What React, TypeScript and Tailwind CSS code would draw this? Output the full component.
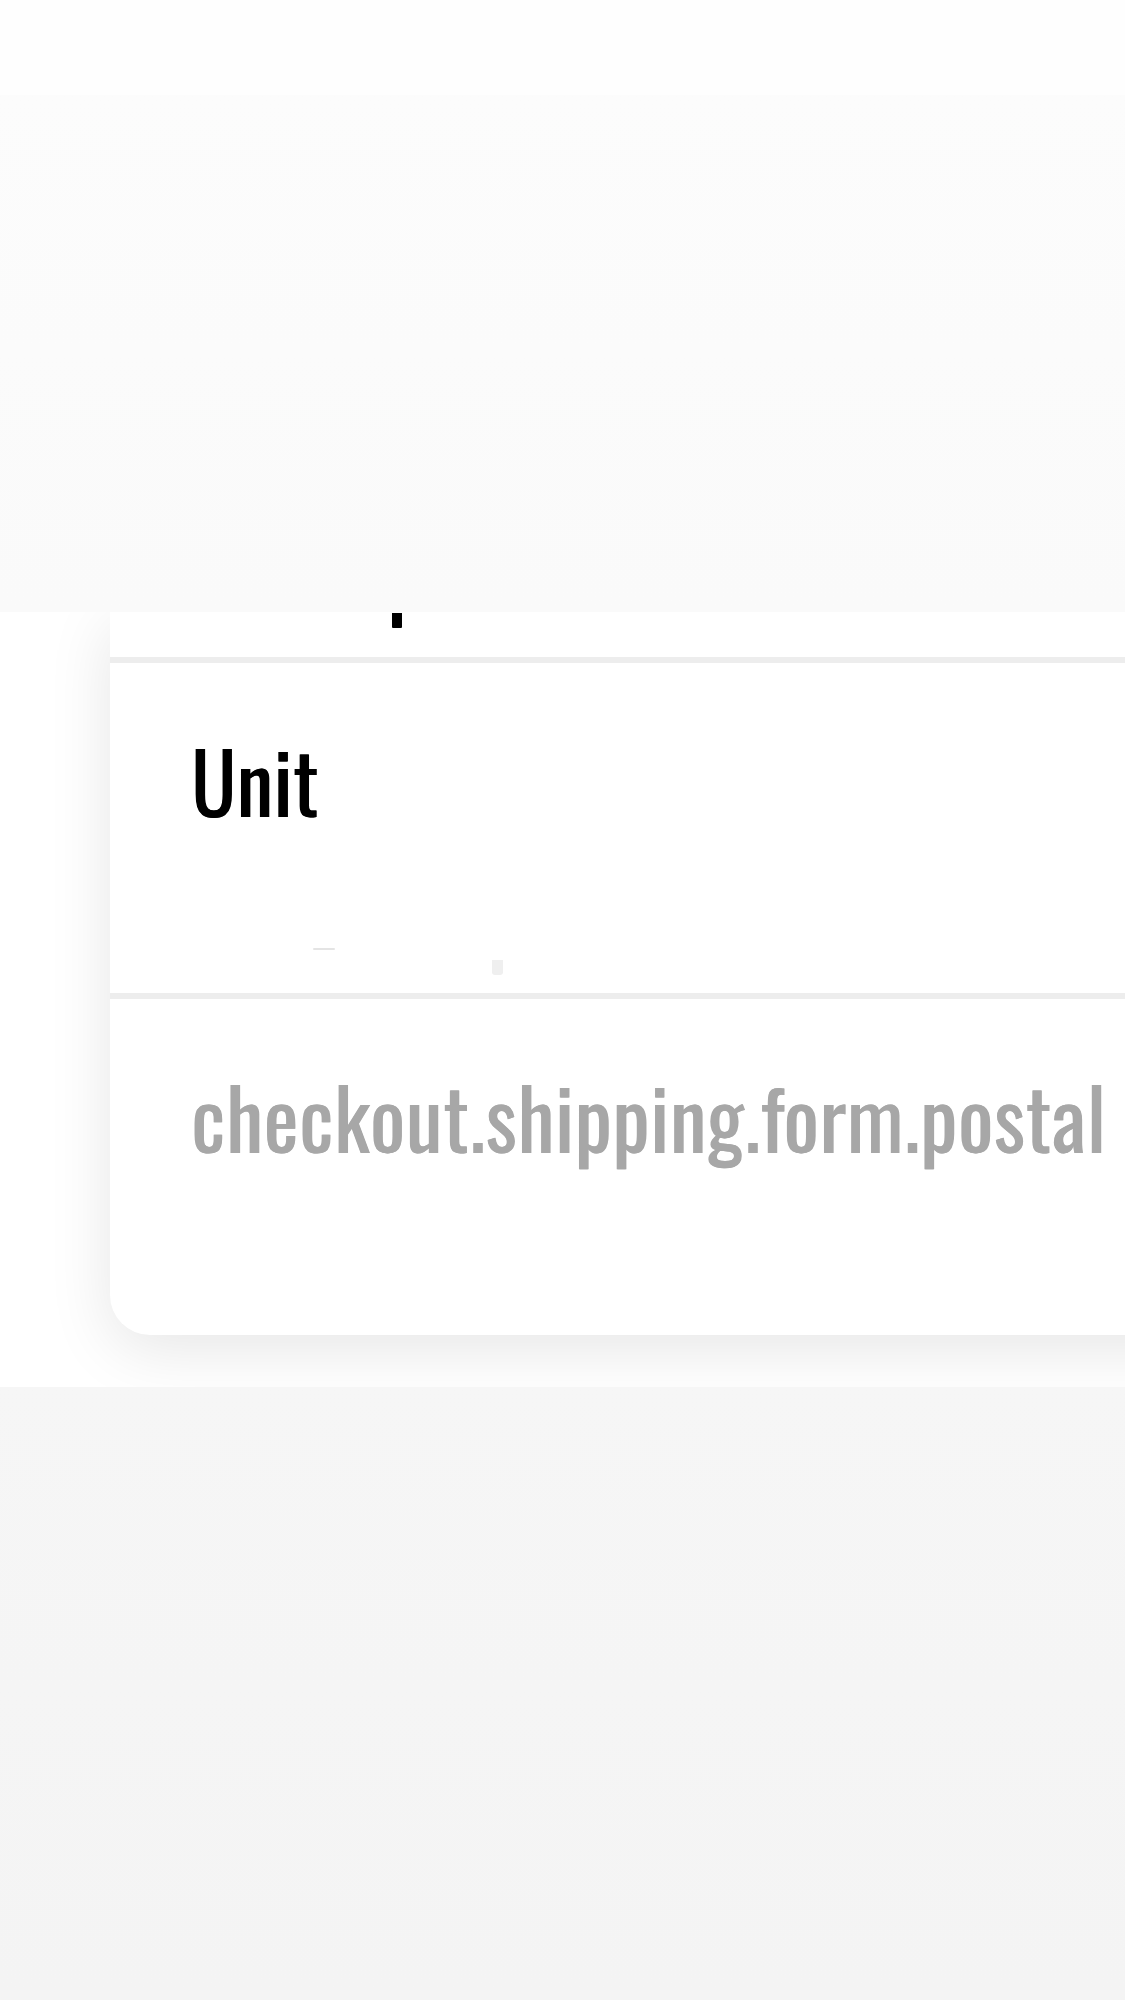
export default function App() {
  return (
    <div className="min-h-[2000px] flex flex-col bg-white font-['Oswald','Roboto_Condensed',sans-serif]">
      {/* Top bar */}
      <div className="h-[95px] bg-[#fefefe]"></div>

      {/* Sheet covering the upper part of the form */}
      <div className="h-[517px] bg-gradient-to-b from-[#fcfcfc] to-[#fafafa]"></div>

      {/* Form card */}
      <div className="bg-white pl-[110px] pb-[52px] overflow-hidden">
        <div className="w-[1100px] bg-white rounded-bl-[40px] shadow-[0_14px_64px_rgba(0,0,0,0.1)]">
          {/* tail of the previous field */}
          <div className="h-[45px] pl-[282px] pt-[1px]">
            <div className="w-[10px] h-[15px] bg-black rounded-b-[1px]"></div>
          </div>

          <div className="h-[336px] border-t-[6px] border-[#ededed] pl-[81px] pt-[75px] flex flex-col">
            <label className="text-[83px] font-normal tracking-[0.4px] [text-shadow:0.6px_0_0_currentColor] leading-none text-black">
              Unit
            </label>
            <div className="mt-[127px] ml-[122px] w-[22px] h-[2px] bg-[#e4e4e4] rounded-full"></div>
            <div className="mt-[10px] ml-[301px] w-[11px] h-[15px] bg-[#efefef] rounded-b-[3px]"></div>
          </div>

          <div className="h-[342px] border-t-[6px] border-[#ededed] pl-[81px] pt-[75px] flex flex-col">
            <label className="text-[83px] font-normal tracking-[0.7px] [text-shadow:0.6px_0_0_currentColor] leading-none text-[#a7a7a7] whitespace-nowrap">
              checkout.shipping.form.postal
            </label>
          </div>
        </div>
      </div>

      {/* Page background below */}
      <div className="flex-1 bg-gradient-to-b from-[#f6f6f6] to-[#f4f4f4]"></div>
    </div>
  );
}
